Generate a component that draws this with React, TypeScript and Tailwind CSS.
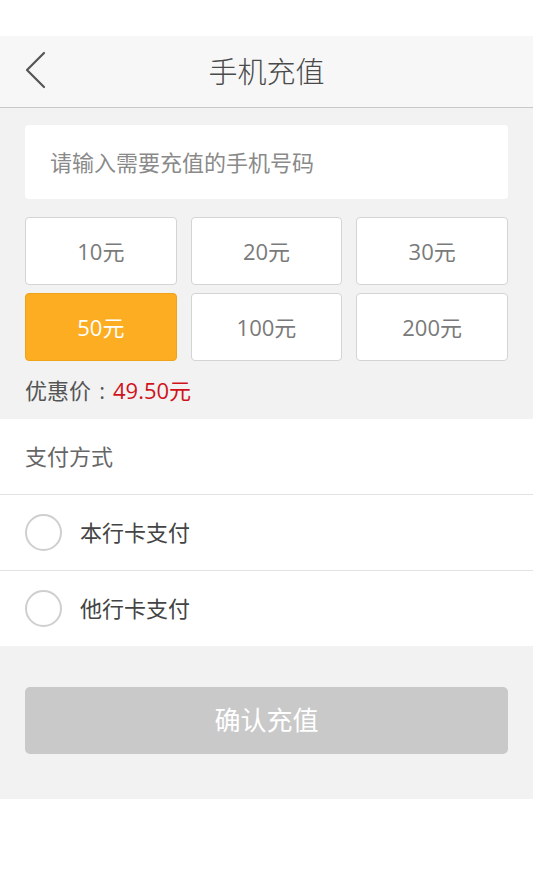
const amounts = ["10元", "20元", "30元", "50元", "100元", "200元"];
const selected = "50元";
const methods = ["本行卡支付", "他行卡支付"];

export default function App() {
  return (
    <div
      lang="zh-CN"
      className="w-[533px] min-h-[887px] bg-white"
      style={{ fontFamily: '"Open Sans", "Noto Sans CJK SC", sans-serif' }}
    >
      <div className="h-[36px] bg-white" />

      <div className="relative flex h-[72px] items-center justify-center border-b border-[#c8c8c8] bg-[#f7f7f7]">
        <button className="absolute left-[24px] top-[15px] h-[38px] w-[24px]">
          <svg width="24" height="38" viewBox="0 0 24 38" fill="none">
            <path d="M20 2 L3 19 L20 36" stroke="#555" strokeWidth="2.2" strokeLinecap="round" strokeLinejoin="round" />
          </svg>
        </button>
        <h1 className="text-[29px] font-light leading-none text-[#4a4a4a]">手机充值</h1>
      </div>

      <div className="bg-[#f2f2f2] px-[25px] pt-[17px] pb-[14px]">
        <div className="flex h-[74px] items-center rounded-[4px] bg-white px-[25px]">
          <span className="text-[22px] text-[#8a8a8a]">请输入需要充值的手机号码</span>
        </div>

        <div className="mt-[18px] grid grid-cols-3 gap-x-[14px] gap-y-[8px]">
          {amounts.map((a) =>
            a === selected ? (
              <div
                key={a}
                className="flex h-[68px] items-center justify-center rounded-[4px] border border-[#f0a21a] bg-[#fdad22] text-[22px] text-white"
              >
                {a}
              </div>
            ) : (
              <div
                key={a}
                className="flex h-[68px] items-center justify-center rounded-[4px] border border-[#d4d4d4] bg-white text-[22px] text-[#7a7a7a]"
              >
                {a}
              </div>
            )
          )}
        </div>

        <p className="mt-[14px] text-[22px] leading-[30px] text-[#555]">
          优惠价
          <span className="inline-block w-[22px] text-center">:</span>
          <span className="text-[#d0121b]">49.50元</span>
        </p>
      </div>

      <div className="bg-white">
        <div className="flex h-[76px] items-center border-b border-[#e2e2e2] px-[25px] text-[22px] text-[#666]">
          支付方式
        </div>
        {methods.map((m, i) => (
          <div
            key={m}
            className={
              i === 0
                ? "flex h-[76px] items-center border-b border-[#e2e2e2] px-[25px]"
                : "flex h-[75px] items-center px-[25px]"
            }
          >
            <span className="h-[37px] w-[37px] rounded-full border-2 border-[#cfcfcf]" />
            <span className="ml-[18px] text-[22px] text-[#444]">{m}</span>
          </div>
        ))}
      </div>

      <div className="bg-[#f2f2f2] px-[25px] pt-[41px] pb-[45px]">
        <button className="flex h-[67px] w-full items-center justify-center rounded-[5px] bg-[#c9c9c9] text-[26px] text-white">
          确认充值
        </button>
      </div>
    </div>
  );
}
